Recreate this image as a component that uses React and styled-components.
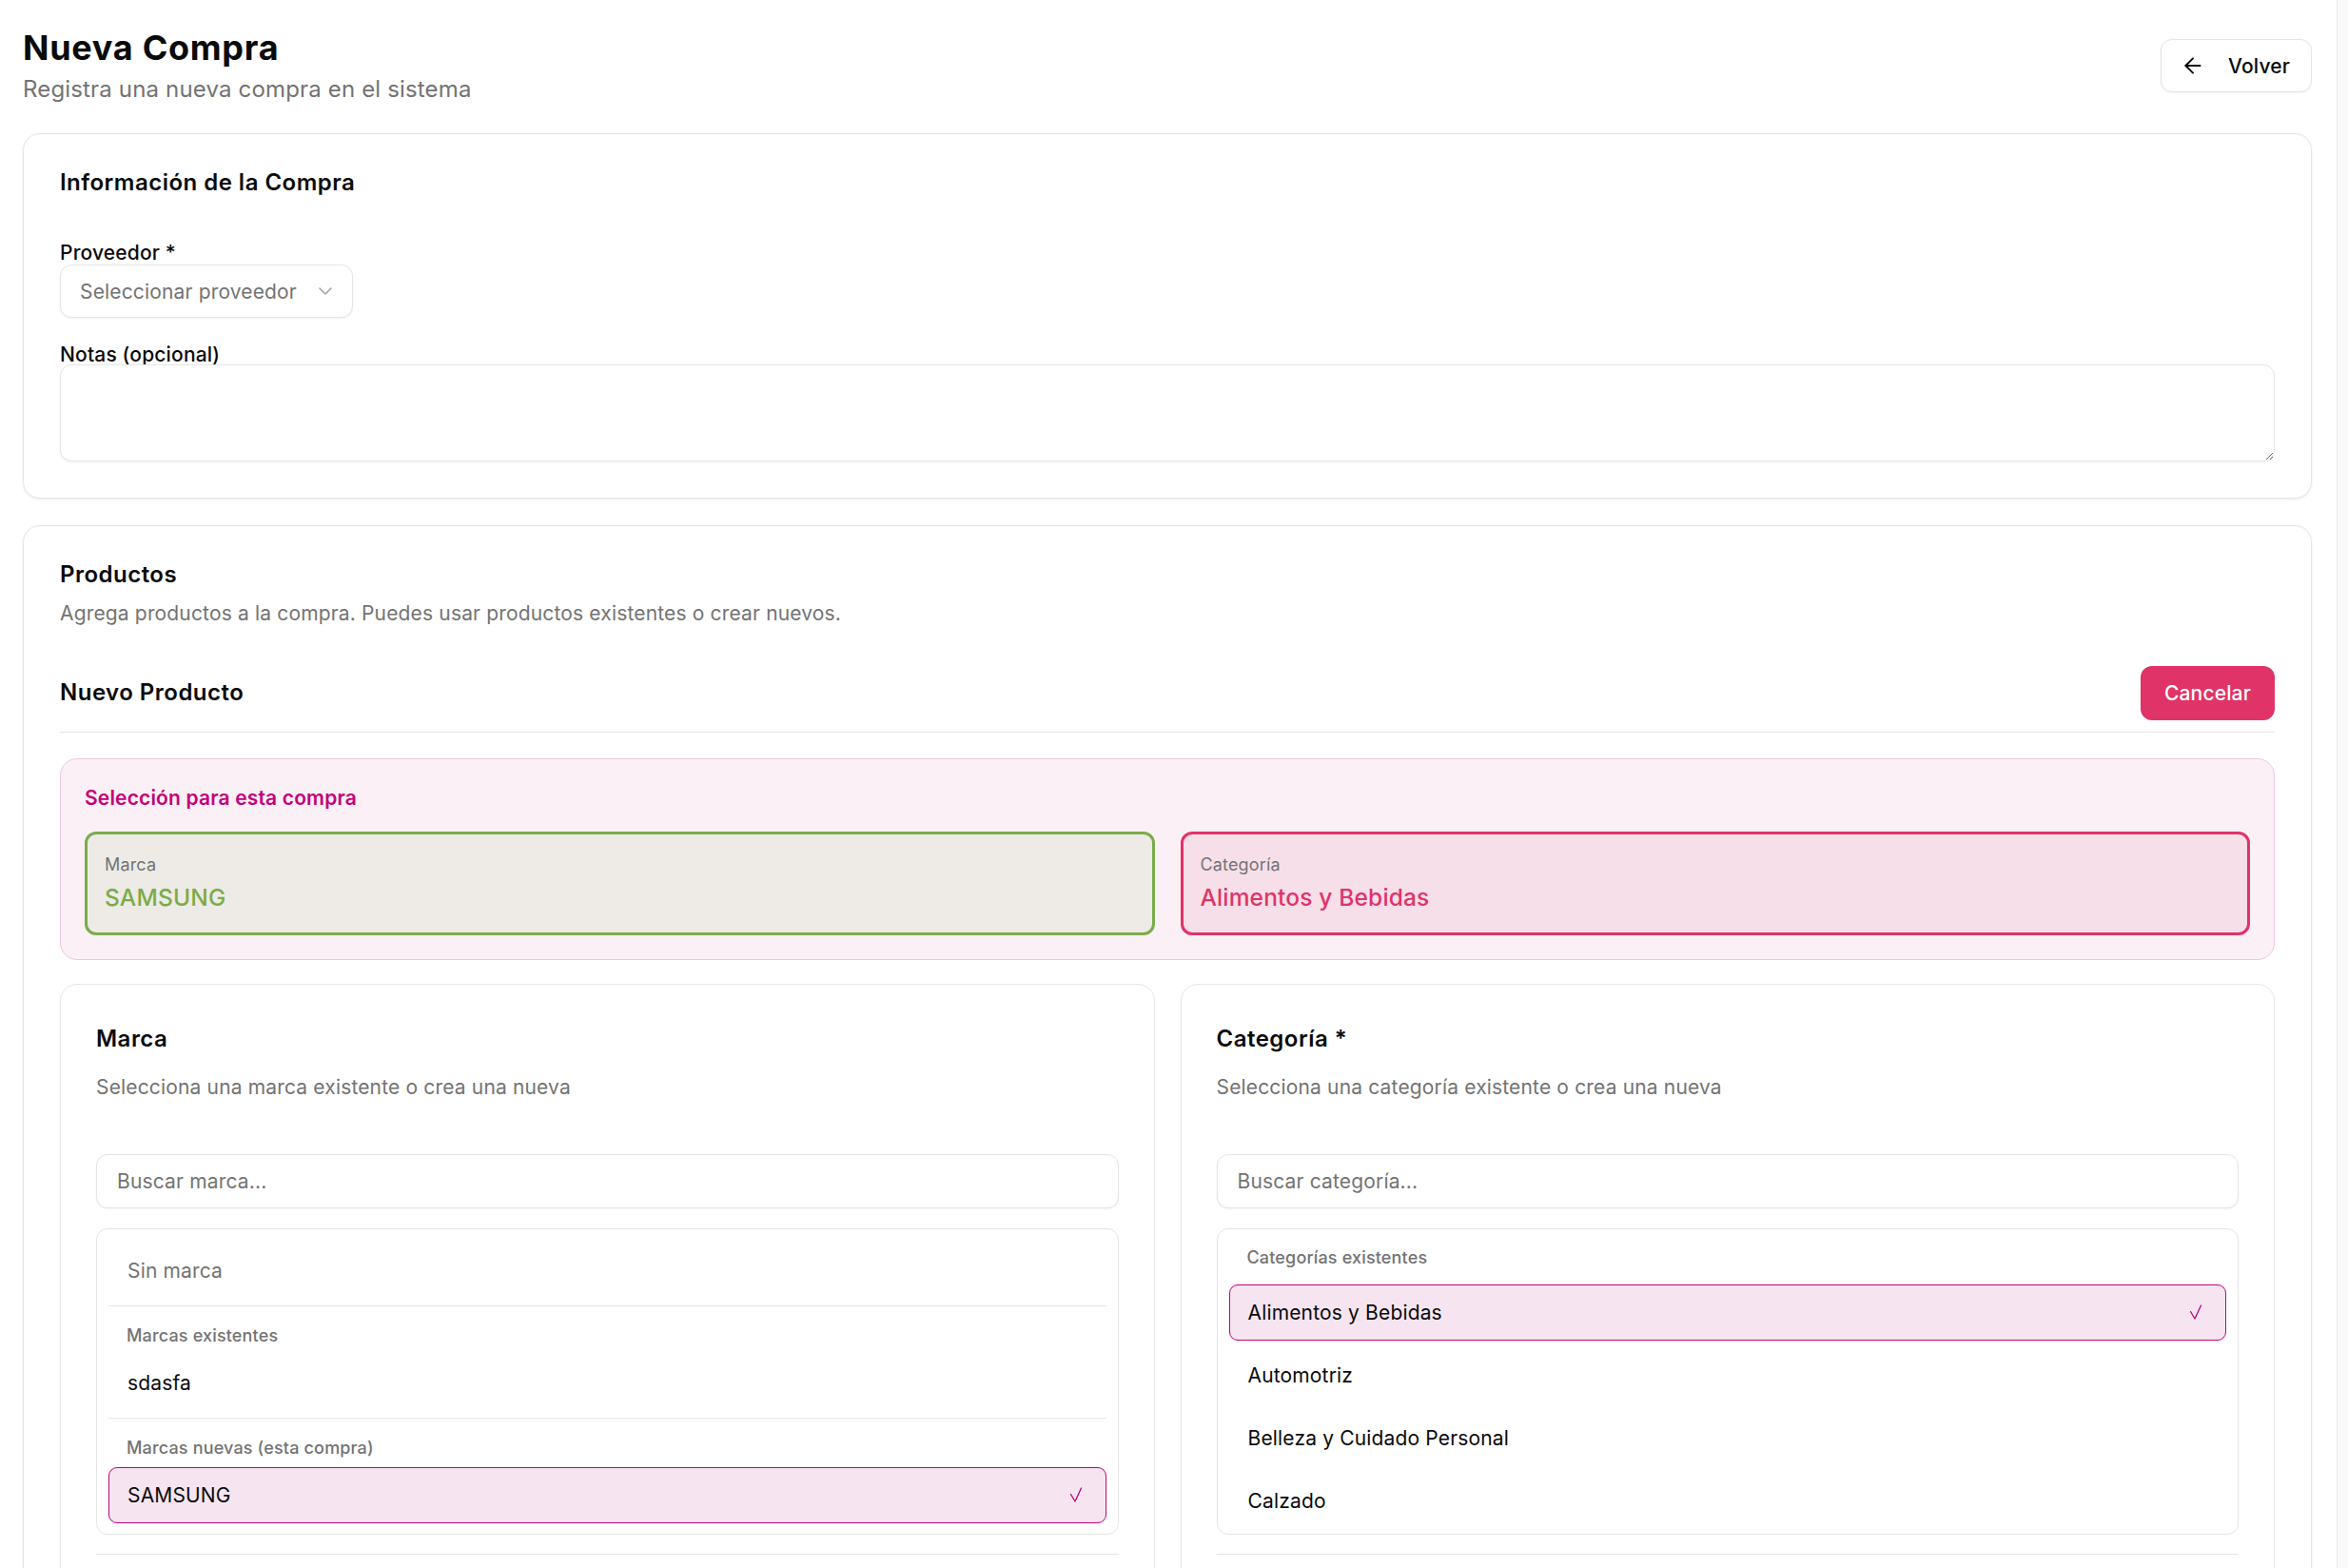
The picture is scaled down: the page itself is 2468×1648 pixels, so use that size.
import styled, { createGlobalStyle } from "styled-components";
import { ArrowLeft, ChevronDown } from "lucide-react";

const brands = {
  existing: ["sdasfa"],
  fresh: ["SAMSUNG"],
};

const categories = [
  "Alimentos y Bebidas",
  "Automotriz",
  "Belleza y Cuidado Personal",
  "Calzado",
];

const selectedBrand = "SAMSUNG";
const selectedCategory = "Alimentos y Bebidas";

const GlobalStyle = createGlobalStyle`
  * {
    box-sizing: border-box;
  }

  html,
  body {
    margin: 0;
    overflow: hidden;
    background: #ffffff;
    color: #0a0a0a;
    font-family: Inter, "Noto Sans", "Liberation Sans", sans-serif;
    letter-spacing: 0.01em;
    -webkit-font-smoothing: antialiased;
  }
`;

const Check = () => (
  <svg width="14" height="16" viewBox="0 0 14 16" fill="none">
    <path
      d="M1.5 7.5 L6 15 L12.5 1"
      stroke="#c2007c"
      strokeWidth="1.3"
      strokeLinecap="round"
      strokeLinejoin="round"
    />
  </svg>
);

const App = () => {
  return (
    <>
      <GlobalStyle />
      <Shell>
        <Main>
          <Header>
            <div>
              <PageTitle>Nueva Compra</PageTitle>
              <PageSubtitle>Registra una nueva compra en el sistema</PageSubtitle>
            </div>
            <BackButton>
              <ArrowLeft size={26} strokeWidth={1.8} />
              Volver
            </BackButton>
          </Header>

          <Card>
            <CardTitle>Información de la Compra</CardTitle>
            <FieldGroup>
              <FieldLabel>Proveedor *</FieldLabel>
              <SelectTrigger>
                Seleccionar proveedor
                <ChevronDown size={24} strokeWidth={1.6} />
              </SelectTrigger>
            </FieldGroup>
            <FieldGroup $spaced>
              <FieldLabel $tight>Notas (opcional)</FieldLabel>
              <NotesArea />
            </FieldGroup>
          </Card>

          <Card>
            <CardTitle>Productos</CardTitle>
            <CardHint>
              Agrega productos a la compra. Puedes usar productos existentes o
              crear nuevos.
            </CardHint>

            <SubHeader>
              <SubTitle>Nuevo Producto</SubTitle>
              <DangerButton>Cancelar</DangerButton>
            </SubHeader>

            <SelectionBox>
              <SelectionTitle>Selección para esta compra</SelectionTitle>
              <TwoColumns $gap={27}>
                <ChosenBox $tone="green">
                  <ChosenLabel>Marca</ChosenLabel>
                  <ChosenValue $tone="green">{selectedBrand}</ChosenValue>
                </ChosenBox>
                <ChosenBox $tone="pink">
                  <ChosenLabel>Categoría</ChosenLabel>
                  <ChosenValue $tone="pink">{selectedCategory}</ChosenValue>
                </ChosenBox>
              </TwoColumns>
            </SelectionBox>

            <PanelRow>
              <TwoColumns $gap={27}>
                <Panel>
                  <PanelTitle>Marca</PanelTitle>
                  <PanelHint>Selecciona una marca existente o crea una nueva</PanelHint>
                  <SearchInput placeholder="Buscar marca..." />
                  <OptionList>
                    <OptionRow $muted>Sin marca</OptionRow>
                    <Separator />
                    <GroupLabel>Marcas existentes</GroupLabel>
                    {brands.existing.map((name) => (
                      <OptionRow key={name} $selected={name === selectedBrand}>
                        {name}
                        {name === selectedBrand && <Check />}
                      </OptionRow>
                    ))}
                    <Separator />
                    <GroupLabel>Marcas nuevas (esta compra)</GroupLabel>
                    {brands.fresh.map((name) => (
                      <OptionRow key={name} $selected={name === selectedBrand}>
                        {name}
                        {name === selectedBrand && <Check />}
                      </OptionRow>
                    ))}
                  </OptionList>
                  <PanelDivider />
                </Panel>

                <Panel>
                  <PanelTitle>Categoría *</PanelTitle>
                  <PanelHint>Selecciona una categoría existente o crea una nueva</PanelHint>
                  <SearchInput placeholder="Buscar categoría..." />
                  <OptionList>
                    <GroupLabel $loose>Categorías existentes</GroupLabel>
                    <OptionStack>
                      {categories.map((name) => (
                        <OptionRow key={name} $selected={name === selectedCategory}>
                          {name}
                          {name === selectedCategory && <Check />}
                        </OptionRow>
                      ))}
                    </OptionStack>
                  </OptionList>
                  <PanelDivider />
                </Panel>
              </TwoColumns>
            </PanelRow>
          </Card>
        </Main>
        <ScrollTrack />
      </Shell>
    </>
  );
};

export default App;

const Shell = styled.div`
  display: flex;
  height: 100vh;
  overflow: hidden;
`;

const Main = styled.main`
  flex: 1;
  min-width: 0;
  padding: 26px 26px 0 24px;
  display: flex;
  flex-direction: column;
  gap: 28px;
`;

const ScrollTrack = styled.div`
  width: 12px;
  flex-shrink: 0;
  background: #fafafa;
  border-left: 1px solid #ebebeb;
`;

const Header = styled.header`
  display: flex;
  align-items: center;
  justify-content: space-between;
`;

const PageTitle = styled.h1`
  margin: 0;
  font-size: 36px;
  line-height: 48px;
  font-weight: 700;
  letter-spacing: 0.02em;
`;

const PageSubtitle = styled.p`
  margin: 2px 0 0;
  font-size: 24px;
  line-height: 36px;
  color: #737373;
`;

const BackButton = styled.button`
  display: flex;
  align-items: center;
  gap: 24px;
  height: 56px;
  padding: 0 22px 0 20px;
  background: #ffffff;
  border: 1px solid #e5e5e5;
  border-radius: 12px;
  box-shadow: 0 1px 2px rgba(0, 0, 0, 0.05);
  font-family: inherit;
  font-size: 21px;
  font-weight: 500;
  letter-spacing: inherit;
  color: #0a0a0a;
`;

const Card = styled.section`
  background: #ffffff;
  border: 1px solid #e6e6e6;
  border-radius: 18px;
  box-shadow: 0 1px 3px rgba(0, 0, 0, 0.06), 0 1px 2px rgba(0, 0, 0, 0.03);
  padding: 36px 38px 38px;
`;

const CardTitle = styled.h2`
  margin: 0;
  font-size: 24px;
  line-height: 30px;
  font-weight: 600;
  letter-spacing: 0.02em;
`;

const CardHint = styled.p`
  margin: 10px 0 0;
  font-size: 21px;
  line-height: 31.5px;
  color: #737373;
`;

const FieldGroup = styled.div`
  display: flex;
  flex-direction: column;
  align-items: flex-start;
  margin-top: ${(p) => (p.$spaced ? 28 : 48)}px;
`;

const FieldLabel = styled.label`
  font-size: 21px;
  line-height: 21px;
  font-weight: 500;
  margin-bottom: ${(p) => (p.$tight ? 0 : 2)}px;
`;

const SelectTrigger = styled.button`
  display: flex;
  align-items: center;
  justify-content: space-between;
  width: 308px;
  height: 56px;
  padding: 0 16px 0 20px;
  background: #ffffff;
  border: 1px solid #e5e5e5;
  border-radius: 12px;
  box-shadow: 0 1px 2px rgba(0, 0, 0, 0.05);
  font-family: inherit;
  font-size: 21px;
  letter-spacing: inherit;
  color: #737373;

  svg {
    color: #a3a3a3;
  }
`;

const NotesArea = styled.textarea`
  width: 100%;
  height: 102px;
  padding: 12px 18px;
  border: 1px solid #e5e5e5;
  border-radius: 12px;
  box-shadow: 0 1px 2px rgba(0, 0, 0, 0.05);
  font-family: inherit;
  font-size: 21px;
  resize: vertical;
  outline: none;
`;

const SubHeader = styled.div`
  display: flex;
  align-items: center;
  justify-content: space-between;
  margin-top: 39px;
  padding-bottom: 12px;
  border-bottom: 1px solid #e5e5e5;
`;

const SubTitle = styled.h3`
  margin: 0;
  font-size: 24px;
  line-height: 30px;
  font-weight: 600;
  letter-spacing: 0.02em;
`;

const DangerButton = styled.button`
  height: 57px;
  padding: 0 25px;
  background: #e03368;
  color: #ffffff;
  border: none;
  border-radius: 12px;
  font-family: inherit;
  font-size: 21px;
  font-weight: 500;
  letter-spacing: inherit;
`;

const SelectionBox = styled.div`
  margin-top: 27px;
  padding: 25px;
  background: #fbf0f6;
  border: 1px solid #efc6de;
  border-radius: 18px;
`;

const SelectionTitle = styled.div`
  font-size: 21px;
  line-height: 31.5px;
  font-weight: 600;
  color: #c2007c;
  margin-bottom: 20px;
`;

const TwoColumns = styled.div`
  display: grid;
  grid-template-columns: 1fr 1fr;
  gap: ${(p) => p.$gap}px;
`;

const tones = {
  green: { border: "#7cab4a", bg: "#eeebe6", text: "#7cab4a" },
  pink: { border: "#e03368", bg: "#f7dfe9", text: "#e03368" },
};

const ChosenBox = styled.div`
  padding: 18px 18px 19px;
  border: 3px solid ${(p) => tones[p.$tone].border};
  background: ${(p) => tones[p.$tone].bg};
  border-radius: 12px;
`;

const ChosenLabel = styled.div`
  font-size: 18px;
  line-height: 27px;
  color: #737373;
`;

const ChosenValue = styled.div`
  margin-top: 3px;
  font-size: 24.5px;
  line-height: 36px;
  font-weight: 500;
  color: ${(p) => tones[p.$tone].text};
`;

const PanelRow = styled.div`
  margin-top: 25px;
`;

const Panel = styled.div`
  padding: 39px 37px 36px;
  background: #ffffff;
  border: 1px solid #e6e6e6;
  border-radius: 18px;
  box-shadow: 0 1px 2px rgba(0, 0, 0, 0.04);
`;

const PanelTitle = styled.h4`
  margin: 0;
  font-size: 24px;
  line-height: 36px;
  font-weight: 600;
  letter-spacing: 0.02em;
`;

const PanelHint = styled.p`
  margin: 17px 0 0;
  font-size: 21px;
  line-height: 31.5px;
  color: #737373;
`;

const SearchInput = styled.input`
  display: block;
  width: 100%;
  height: 57px;
  margin-top: 54px;
  padding: 0 21px;
  border: 1px solid #e5e5e5;
  border-radius: 12px;
  box-shadow: 0 1px 2px rgba(0, 0, 0, 0.05);
  font-family: inherit;
  font-size: 21px;
  letter-spacing: inherit;
  color: #0a0a0a;
  outline: none;

  &::placeholder {
    color: #737373;
  }
`;

const OptionList = styled.div`
  margin-top: 21px;
  max-height: 322px;
  overflow: hidden;
  padding: 14px 12px 12px;
  border: 1px solid #e5e5e5;
  border-radius: 12px;
`;

const OptionStack = styled.div`
  display: flex;
  flex-direction: column;
  gap: 7px;
`;

const OptionRow = styled.div`
  display: flex;
  align-items: center;
  justify-content: space-between;
  height: 59px;
  padding: 0 24px 0 19px;
  border: 1px solid ${(p) => (p.$selected ? "#c2007c" : "transparent")};
  border-radius: 9px;
  background: ${(p) => (p.$selected ? "#f6e5f0" : "transparent")};
  font-size: 21px;
  color: ${(p) => (p.$muted ? "#737373" : "#0a0a0a")};
`;

const GroupLabel = styled.div`
  padding: ${(p) => (p.$loose ? 2 : 5)}px 19px 0;
  margin-bottom: ${(p) => (p.$loose ? 15 : 7)}px;
  font-size: 18px;
  line-height: 27px;
  font-weight: 500;
  color: #737373;
`;

const Separator = styled.div`
  height: 1px;
  margin: 7px 0 12px;
  background: #e5e5e5;
`;

const PanelDivider = styled.div`
  height: 1px;
  margin-top: 20px;
  background: #e5e5e5;
`;
